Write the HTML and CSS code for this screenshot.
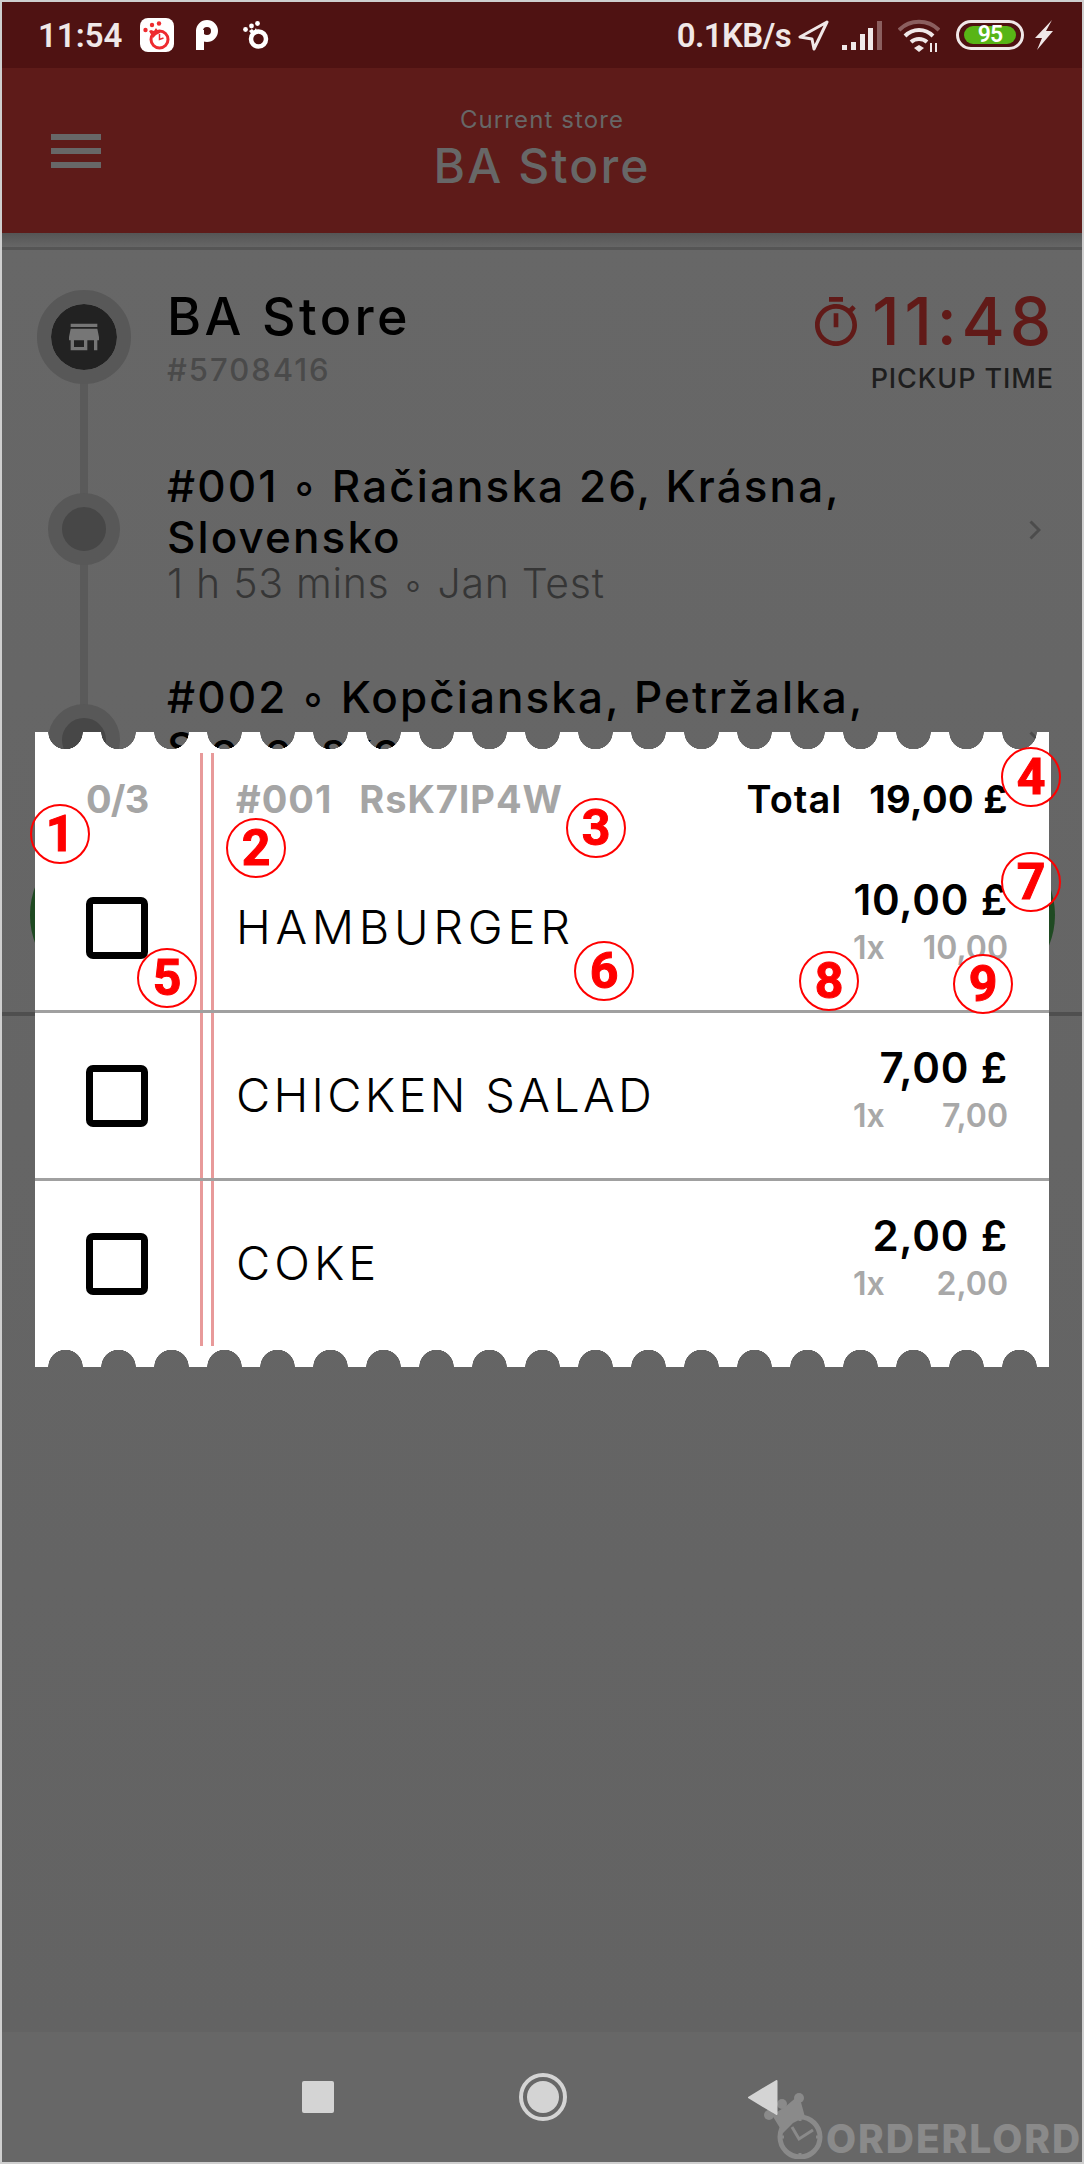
FILE: index.html
```html
<!DOCTYPE html>
<html lang="en">
<head>
  <meta charset="UTF-8">
  <meta name="viewport" content="width=device-width, initial-scale=1.0">
  <title>Current store - BA Store</title>
  <link rel="stylesheet" href="styles.css">
</head>
<body>
  <div class="screen">

    <!-- status bar -->
    <div class="status">
      <div class="status-left">
        <span class="clock">11:54</span>
        <svg class="app-icon" viewBox="0 0 34 34">
          <rect width="34" height="34" rx="8" fill="#fff"/>
          <circle cx="19.500" cy="21.500" r="8.500" fill="#fff" stroke="#ee2b2f" stroke-width="3"/>
          <path d="M9 13l4 7 3-3 4-2 1-3-3 1-2-3-2 3-3-1z" fill="#ee2b2f"/>
          <circle cx="5.500" cy="12" r="2.200" fill="#ee2b2f"/>
          <circle cx="12" cy="7" r="2.200" fill="#ee2b2f"/>
          <circle cx="19" cy="5.500" r="2.200" fill="#ee2b2f"/>
          <path d="M19.500 16v5.500l4-1.500" fill="none" stroke="#ee2b2f" stroke-width="1.500"/>
        </svg>
        <svg class="p-icon" viewBox="0 0 22 30">
          <rect x="0" y="10" width="8" height="20" fill="#fff"/>
          <circle cx="11" cy="11" r="7.500" fill="none" stroke="#fff" stroke-width="7"/>
        </svg>
        <svg class="ring-icon" viewBox="0 0 26 28">
          <circle cx="15.500" cy="18" r="7.500" fill="none" stroke="#fff" stroke-width="4.500"/>
          <path d="M6 10l4 5 4-4-1-4-2 3-2-2z" fill="#fff"/>
          <circle cx="2.500" cy="8.500" r="2.400" fill="#fff"/>
          <circle cx="8.500" cy="5" r="2.400" fill="#fff"/>
          <circle cx="14.500" cy="2.500" r="2.400" fill="#fff"/>
        </svg>
      </div>
      <div class="status-right">
        <span class="speed">0.1KB/s</span>
        <svg class="arrow-icon" viewBox="0 0 31 31">
          <path d="M29 2L2 17l12 2 2 10z" fill="none" stroke="#f0e8e8" stroke-width="3" stroke-linejoin="round"/>
        </svg>
        <div class="signal">
          <span class="bar bar-1"></span>
          <span class="bar bar-2"></span>
          <span class="bar bar-3"></span>
          <span class="bar bar-4"></span>
          <span class="bar bar-5"></span>
        </div>
        <svg class="wifi-icon" viewBox="0 0 42 33">
          <path d="M1 11C12 0 30 0 41 11" fill="none" stroke="#8b5f5f" stroke-width="4"/>
          <path d="M7 17C15 9 27 9 35 17" fill="none" stroke="#f0e8e8" stroke-width="4"/>
          <path d="M13 23c4.500-4 11.500-4 16 0" fill="none" stroke="#f0e8e8" stroke-width="4"/>
          <path d="M21 33l-5-4 5-3 5 3z" fill="#f0e8e8"/>
          <path d="M33 24v9M38 24v9" stroke="#f0e8e8" stroke-width="2"/>
        </svg>
        <div class="battery"><span class="battery-level">95</span></div>
        <svg class="bolt-icon" viewBox="0 0 18 30">
          <path d="M17 0L0 18h7L2 30l16-19h-7z" fill="#f0e8e8"/>
        </svg>
      </div>
    </div>

    <!-- app bar -->
    <div class="appbar">
      <div class="menu-icon"><span></span><span></span><span></span></div>
      <div class="appbar-title">
        <div class="appbar-small">Current store</div>
        <div class="appbar-name">BA Store</div>
      </div>
    </div>

    <!-- route behind the ticket -->
    <div class="content">
      <div class="appbar-shadow"></div>
      <div class="route">
        <div class="stop stop-store">
          <div class="marker-col">
            <div class="marker-store">
              <svg viewBox="0 0 24 24" width="40" height="40"><path d="M20 4H4v2h16V4zm1 10v-2l-1-5H4l-1 5v2h1v6h10v-6h4v6h2v-6h1zm-9 4H6v-4h6v4z" fill="#767676"/></svg>
            </div>
          </div>
          <div>
            <div class="store-name">BA Store</div>
            <div class="store-id">#5708416</div>
          </div>
          <div class="pickup">
            <div class="pickup-time">
              <svg class="timer-icon" viewBox="3 1 18 21"><path d="M15 1H9v2h6V1zm-4 13h2V8h-2v6zm8.030-6.610l1.420-1.420c-.43-.51-.9-.99-1.410-1.410l-1.420 1.420C16.070 4.740 14.120 4 12 4c-4.970 0-9 4.030-9 9s4.020 9 9 9 9-4.030 9-9c0-2.120-.74-4.070-1.970-5.610zM12 20c-3.870 0-7-3.130-7-7s3.130-7 7-7 7 3.130 7 7-3.130 7-7 7z" fill="#611a18"/></svg>
              <span class="time-value">11:48</span>
            </div>
            <div class="pickup-label">PICKUP TIME</div>
          </div>
        </div>

        <div class="stop">
          <div class="marker-col"><div class="marker"></div></div>
          <div>
            <div class="stop-title">#001 ◦ Račianska 26, Krásna,<br>Slovensko</div>
            <div class="stop-sub">1 h 53 mins ◦ Jan Test</div>
          </div>
          <svg class="chevron" viewBox="0 0 12 20"><path d="M1.500 1.500L10 10l-8.500 8.500" fill="none" stroke="#4c4c4c" stroke-width="3"/></svg>
        </div>

        <div class="stop stop-last">
          <div class="marker-col"><div class="marker"></div></div>
          <div>
            <div class="stop-title">#002 ◦ Kopčianska, Petržalka,<br>Slovensko</div>
          </div>
          <svg class="chevron" viewBox="0 0 12 20"><path d="M1.500 1.500L10 10l-8.500 8.500" fill="none" stroke="#4c4c4c" stroke-width="3"/></svg>
        </div>
      </div>
      <div class="green-button"></div>
      <div class="content-divider"></div>
    </div>

    <!-- bottom nav -->
    <div class="navbar">
      <div class="nav-square"></div>
      <svg class="nav-home" viewBox="0 0 48 48">
        <circle cx="24" cy="24" r="22" fill="none" stroke="#d4d4d4" stroke-width="4"/>
        <circle cx="24" cy="24" r="16" fill="#d4d4d4"/>
      </svg>
      <svg class="nav-back" viewBox="0 0 31 37">
        <path d="M29.500 2L2 18.500 29.500 35z" fill="#d4d4d4" stroke="#d4d4d4" stroke-width="2" stroke-linejoin="round"/>
      </svg>
    </div>

    <!-- ticket dialog -->
    <div class="ticket">
      <div class="edge edge-top"></div>
      <div class="ticket-head">
        <div class="progress">0/3</div>
        <div class="order-ref"><span>#001</span><span>RsK7lP4W</span></div>
        <div class="order-total"><span class="total-label">Total</span><span class="total-value">19,00 £</span></div>
      </div>
      <div class="item">
        <div class="checkbox"></div>
        <div class="item-name name-burger">HAMBURGER</div>
        <div class="item-price">
          <div class="price">10,00 £</div>
          <div class="price-sub"><span>1x</span><span>10,00</span></div>
        </div>
      </div>
      <div class="item-sep"></div>
      <div class="item">
        <div class="checkbox"></div>
        <div class="item-name">CHICKEN SALAD</div>
        <div class="item-price">
          <div class="price">7,00 £</div>
          <div class="price-sub"><span>1x</span><span>7,00</span></div>
        </div>
      </div>
      <div class="item-sep"></div>
      <div class="item item-last">
        <div class="checkbox"></div>
        <div class="item-name name-coke">COKE</div>
        <div class="item-price">
          <div class="price">2,00 £</div>
          <div class="price-sub"><span>1x</span><span>2,00</span></div>
        </div>
      </div>
      <div class="edge edge-bottom"></div>
      <div class="ticket-lines"></div>
    </div>

    <!-- numbered callouts -->
    <div class="note note-1">1</div>
    <div class="note note-2">2</div>
    <div class="note note-3">3</div>
    <div class="note note-4">4</div>
    <div class="note note-5">5</div>
    <div class="note note-6">6</div>
    <div class="note note-7">7</div>
    <div class="note note-8">8</div>
    <div class="note note-9">9</div>

    <!-- watermark -->
    <div class="watermark">
      <svg class="watermark-logo" viewBox="0 0 62 66">
        <circle cx="38" cy="44" r="20" fill="none" stroke="#8a8a8a" stroke-width="5"/>
        <path d="M10 22l13-8 14-12 6 22-12 6-10 10z" fill="#8a8a8a"/>
        <circle cx="7" cy="22" r="5" fill="#8a8a8a"/>
        <circle cx="20" cy="11" r="5" fill="#8a8a8a"/>
        <circle cx="37" cy="5" r="5" fill="#8a8a8a"/>
        <path d="M30 34l7 12 14-9" fill="none" stroke="#8a8a8a" stroke-width="3"/>
        <path d="M38 24v4M38 60v4M18 44h4M54 44h4" stroke="#8a8a8a" stroke-width="3"/>
      </svg>
      <span class="watermark-text">ORDERLORD</span>
    </div>
  </div>
</body>
</html>
```

FILE: styles.css
```css
body {
  margin: 0;
  background-color: #cfcfcf;
  font-family: "Inter", "Liberation Sans", sans-serif;
}
.screen {
  position: relative;
  width: 1080px;
  height: 2160px;
  margin: 2px;
  display: flex;
  flex-direction: column;
  overflow: hidden;
  background-color: #656565;
}

/* status bar */
.status {
  height: 66px;
  flex: none;
  background-color: #4f1212;
  display: flex;
  justify-content: space-between;
  align-items: center;
  color: #f0e8e8;
  font-family: "Roboto", sans-serif;
  font-weight: 600;
  font-size: 33px;
}
.status-left {
  display: flex;
  align-items: center;
  padding-left: 36px;
}
.app-icon {
  width: 34px;
  height: 34px;
  margin-left: 18px;
}
.p-icon {
  width: 22px;
  height: 30px;
  margin-left: 22px;
}
.ring-icon {
  width: 26px;
  height: 28px;
  margin-left: 25px;
}
.status-right {
  display: flex;
  align-items: center;
  padding-right: 29px;
}
.speed {
  letter-spacing: -0.600px;
}
.arrow-icon {
  width: 31px;
  height: 31px;
  margin-left: 7px;
}
.signal {
  width: 40px;
  height: 29px;
  margin-left: 13px;
  display: flex;
  align-items: flex-end;
  gap: 3.750px;
}
.bar {
  width: 5px;
  background-color: #f0e8e8;
}
.bar-1 { height: 5px; }
.bar-2 { height: 8px; }
.bar-3 { height: 16px; }
.bar-4 { height: 22px; }
.bar-5 { height: 29px; background-color: #8b5f5f; }
.wifi-icon {
  width: 42px;
  height: 33px;
  margin-left: 16px;
}
.battery {
  width: 68px;
  height: 30px;
  margin-left: 16px;
  box-sizing: border-box;
  border: 3px solid #f0e8e8;
  border-radius: 15px;
  padding: 3px 5px;
  display: flex;
}
.battery-level {
  flex: 1;
  background-color: #58b516;
  border-radius: 9px;
  color: #fff;
  font-size: 23px;
  line-height: 18px;
  text-align: center;
  letter-spacing: -1px;
}
.bolt-icon {
  width: 18px;
  height: 30px;
  margin-left: 11px;
}

/* app bar */
.appbar {
  height: 165px;
  flex: none;
  background-color: #5e1b19;
  display: flex;
  align-items: center;
  position: relative;
  justify-content: center;
}
.menu-icon {
  position: absolute;
  left: 49px;
  width: 50px;
  display: flex;
  flex-direction: column;
  gap: 8px;
}
.menu-icon span {
  height: 6px;
  background-color: #676767;
}
.appbar-title {
  text-align: center;
  color: #676767;
  padding-bottom: 5px;
}
.appbar-small {
  font-size: 24px;
  line-height: 30px;
  margin-bottom: 5px;
  letter-spacing: 1.100px;
}
.appbar-name {
  font-size: 48px;
  line-height: 52px;
  font-weight: 500;
  letter-spacing: 2.100px;
}

/* route */
.content {
  flex: 1;
  background: linear-gradient(#676767, #636363);
}
.appbar-shadow {
  height: 14px;
  background: linear-gradient(#555, #666);
  border-bottom: 3px solid #555;
}
.route {
  position: relative;
  padding-top: 40px;
}
.route::before {
  content: "";
  position: absolute;
  left: 78px;
  top: 60px;
  bottom: 0;
  width: 8px;
  background-color: #5a5a5a;
}
.stop {
  position: relative;
  display: grid;
  grid-template-columns: 165px 1fr auto;
  height: 211px;
  padding-right: 41px;
}
.stop-store {
  height: 171px;
  padding-right: 29px;
}
.stop-last {
  height: 162px;
}
.marker-col {
  display: flex;
  justify-content: center;
  align-items: flex-start;
  padding-right: 1px;
}
.marker-store {
  width: 66px;
  height: 66px;
  border: 14px solid #585858;
  border-radius: 50%;
  background-color: #222;
  background-clip: padding-box;
  display: flex;
  justify-content: center;
  align-items: center;
}
.marker {
  width: 44px;
  height: 44px;
  margin-top: 32px;
  border: 14px solid #585858;
  border-radius: 50%;
  background-color: #474747;
}
.store-name {
  font-size: 52px;
  line-height: 54px;
  font-weight: 500;
  color: #000;
  letter-spacing: 3.400px;
}
.store-id {
  margin-top: 10px;
  font-size: 31px;
  line-height: 32px;
  font-weight: 500;
  color: #4a4a4a;
  letter-spacing: 2px;
}
.pickup {
  text-align: right;
}
.pickup-time {
  display: flex;
  align-items: center;
  justify-content: flex-end;
  height: 66px;
  margin-top: -2px;
}
.timer-icon {
  width: 42px;
  height: 49px;
  margin-right: 15px;
}
.time-value {
  font-size: 66px;
  font-weight: 500;
  color: #611a18;
  letter-spacing: 4.800px;
  margin-right: -3px;
}
.pickup-label {
  margin-top: 10px;
  margin-right: -1px;
  font-size: 27px;
  line-height: 30px;
  font-weight: 500;
  color: #1e1e1e;
  letter-spacing: 0.900px;
}
.stop-title {
  font-size: 44px;
  line-height: 50.500px;
  font-weight: 500;
  color: #000;
  letter-spacing: 2.100px;
}
.stop-sub {
  font-size: 41px;
  line-height: 46px;
  margin-top: -2px;
  font-weight: 300;
  color: #363636;
  letter-spacing: 0.700px;
}
.chevron {
  width: 12px;
  height: 20px;
  margin-top: 59px;
}
.green-button {
  height: 162px;
  margin: 0 27px 0 28px;
  border-radius: 81px;
  background-color: #1f4a22;
}
.content-divider {
  height: 4px;
  margin-top: 16px;
  background-color: #4f4f4f;
}

/* bottom nav */
.navbar {
  height: 130px;
  flex: none;
  background-color: #676767;
  display: flex;
  align-items: center;
  padding-left: 300px;
}
.nav-square {
  width: 32px;
  height: 32px;
  border-radius: 2px;
  background-color: #d4d4d4;
}
.nav-home {
  width: 48px;
  height: 48px;
  margin-left: 185px;
}
.nav-back {
  width: 31px;
  height: 37px;
  margin-left: 180px;
  position: relative;
  z-index: 3;
}

/* ticket */
.ticket {
  position: absolute;
  left: 33px;
  top: 730px;
  width: 1014px;
  height: 635px;
  display: flex;
  flex-direction: column;
}
.ticket-lines {
  position: absolute;
  left: 165px;
  top: 21px;
  bottom: 21px;
  width: 14px;
  box-sizing: border-box;
  border-left: 3px solid #e89a9a;
  border-right: 3px solid #e89a9a;
}
.edge {
  height: 18px;
  flex: none;
  background-size: 53px 18px;
  background-position: 4px 0;
  background-repeat: repeat-x;
}
.edge-top {
  background-image: radial-gradient(circle 17.500px at 26.500px 0, transparent 17px, #fff 17.500px);
}
.edge-bottom {
  background-image: radial-gradient(circle 17.500px at 26.500px 18px, transparent 17px, #fff 17.500px);
}
.ticket-head {
  height: 95px;
  flex: none;
  background-color: #fff;
  display: grid;
  grid-template-columns: 201px 1fr auto;
  align-items: center;
  padding: 3px 41px 0 0;
  box-sizing: border-box;
  font-size: 38px;
  font-weight: 700;
  color: #a5a5a5;
}
.progress {
  padding-left: 51px;
  letter-spacing: -0.800px;
}
.order-ref {
  display: flex;
  gap: 27px;
  letter-spacing: 1px;
}
.order-total {
  display: flex;
  gap: 27px;
  color: #000;
}
.total-label {
  font-weight: 600;
  letter-spacing: 1px;
}
.total-value {
  letter-spacing: 0.400px;
}
.item {
  height: 165px;
  flex: none;
  background-color: #fff;
  display: grid;
  grid-template-columns: 201px 1fr auto;
  align-items: center;
  padding-right: 41px;
}
.item-last {
  height: 168px;
  padding-bottom: 3px;
  box-sizing: border-box;
}
.item-sep {
  height: 3px;
  flex: none;
  position: relative;
  z-index: 1;
  background-color: #a0a0a0;
}
.checkbox {
  width: 62px;
  height: 62px;
  margin-left: 51px;
  box-sizing: border-box;
  border: 7px solid #000;
  border-radius: 7px;
}
.item-name {
  font-size: 47px;
  font-weight: 300;
  color: #000;
  letter-spacing: 3.300px;
  margin-top: -2px;
}
.name-burger {
  letter-spacing: 4.700px;
}
.name-coke {
  letter-spacing: 4px;
}
.item-price {
  text-align: right;
  padding-bottom: 8px;
}
.price {
  font-size: 42px;
  line-height: 46px;
  font-weight: 600;
  color: #000;
  letter-spacing: 0.800px;
}
.price-sub {
  width: 155px;
  margin: 2px 0 0 auto;
  display: flex;
  justify-content: space-between;
  font-size: 32px;
  line-height: 46px;
  font-weight: 600;
  color: #a8a8a8;
}

/* callouts */
.note {
  position: absolute;
  z-index: 3;
  width: 60px;
  height: 60px;
  box-sizing: border-box;
  border: 2px solid #f00;
  border-radius: 50%;
  display: flex;
  justify-content: center;
  align-items: center;
  font-family: "Roboto", sans-serif;
  font-weight: 700;
  font-size: 50px;
  color: #f00;
  -webkit-text-stroke: 1px #f00;
}
.note-1 { left: 28px; top: 802px; }
.note-2 { left: 224px; top: 816px; background-color: #fff; }
.note-3 { left: 564px; top: 796px; background-color: #fff; }
.note-4 { left: 999px; top: 745px; background: linear-gradient(to right, #fff 48px, transparent 48px); }
.note-5 { left: 135px; top: 946px; background-color: #fff; }
.note-6 { left: 572px; top: 939px; background-color: #fff; }
.note-7 { left: 999px; top: 850px; background: linear-gradient(to right, #fff 48px, transparent 48px); }
.note-8 { left: 797px; top: 949px; background-color: #fff; }
.note-9 { left: 951px; top: 952px; background-color: #fff; }

/* watermark */
.watermark {
  position: absolute;
  right: 0;
  bottom: 1px;
  display: flex;
  align-items: flex-end;
}
.watermark-logo {
  width: 62px;
  height: 66px;
  margin: 0 2px 2px 0;
}
.watermark-text {
  font-size: 39px;
  line-height: 44px;
  font-weight: 800;
  color: #8a8a8a;
  letter-spacing: 1.900px;
}
```
